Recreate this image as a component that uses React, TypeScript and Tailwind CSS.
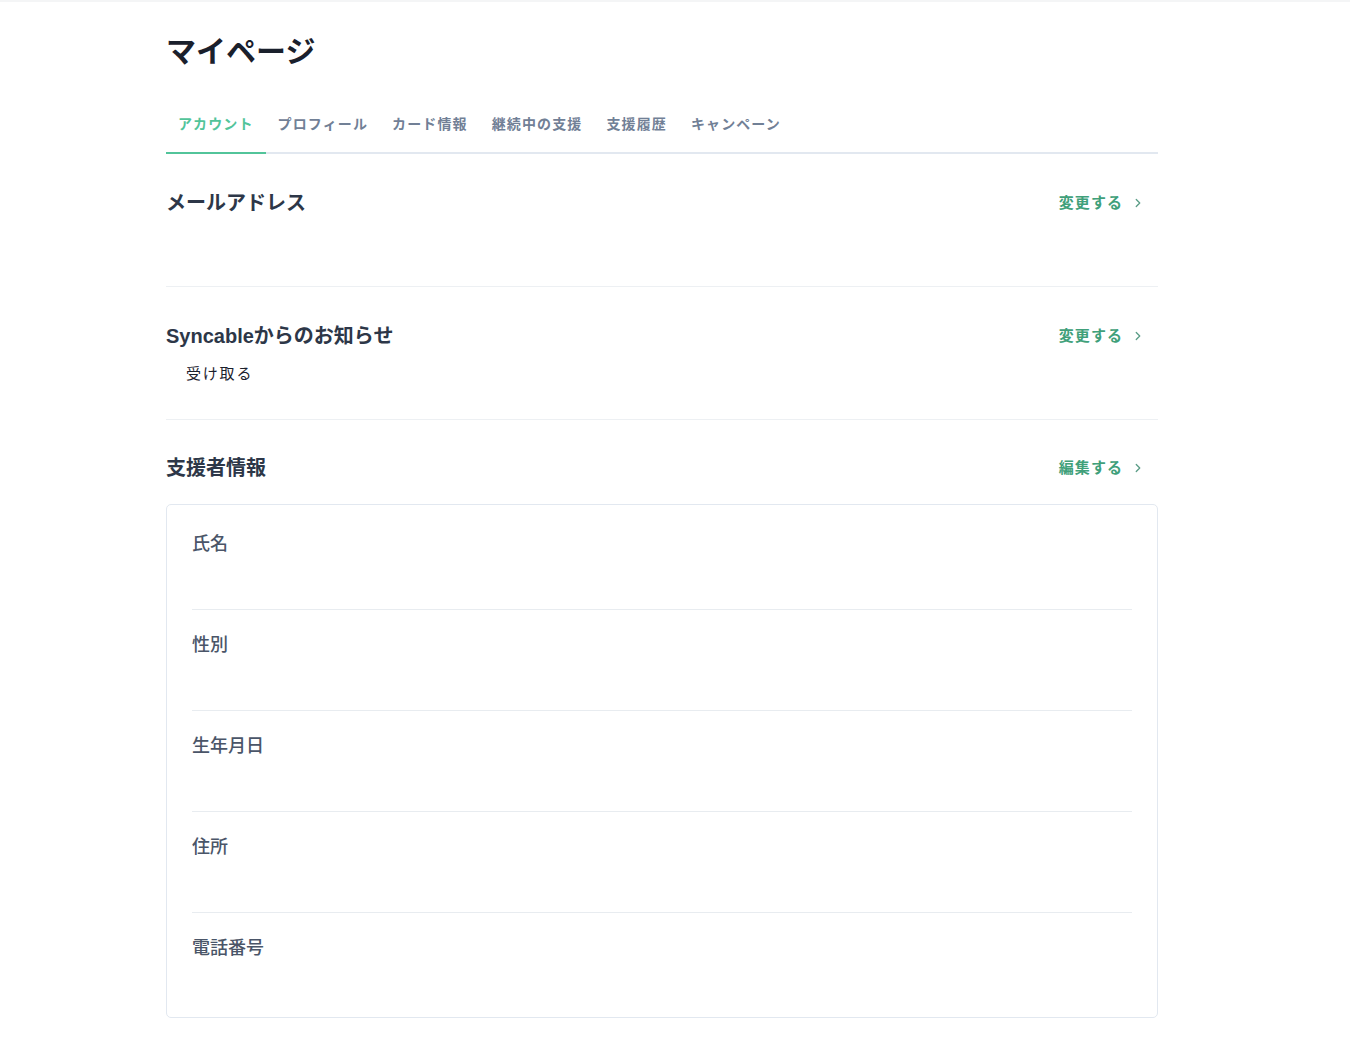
import { ChevronRight } from "lucide-react";

const tabs = ["アカウント", "プロフィール", "カード情報", "継続中の支援", "支援履歴", "キャンペーン"];
const fields = ["氏名", "性別", "生年月日", "住所", "電話番号"];

const font = { fontFamily: '"Liberation Sans", "Noto Sans CJK JP", sans-serif' };

function ActionLink({ label }: { label: string }) {
  return (
    <a className="flex items-center gap-[8px] pr-[13px] text-[15px] font-bold text-[#40a07a] tracking-[0.07em]">
      {label}
      <ChevronRight className="w-[14px] h-[14px] text-[#5a9c86]" strokeWidth={2.2} />
    </a>
  );
}

export default function App() {
  return (
    <div className="min-h-screen bg-white border-t-2 border-[#f4f5f6]" style={font}>
      <main className="w-[992px] ml-[166px]">
        <h1 className="pt-[32px] text-[30px] leading-[36px] font-bold text-[#1a202c]">マイページ</h1>

        <nav className="mt-[32px] flex border-b-2 border-[#e2e8f0]">
          {tabs.map((t, i) => (
            <div
              key={t}
              className={
                i === 0
                  ? "px-[12px] pt-[12px] pb-[18px] -mb-[2px] border-b-2 border-[#52c49a] text-[14px] leading-[20px] font-bold text-[#52c49a] tracking-[0.08em]"
                  : "px-[12px] pt-[12px] pb-[18px] -mb-[2px] border-b-2 border-transparent text-[14px] leading-[20px] font-bold text-[#718096] tracking-[0.08em]"
              }
            >
              {t}
            </div>
          ))}
        </nav>

        <section className="pt-[35px] pb-[34px] border-b border-[#edf0f3]">
          <div className="flex items-center justify-between">
            <h2 className="text-[20px] leading-[28px] font-bold text-[#2d3748]">メールアドレス</h2>
            <ActionLink label="変更する" />
          </div>
          <div className="h-[35px]" />
        </section>

        <section className="pt-[35px] pb-[34px] border-b border-[#edf0f3]">
          <div className="flex items-center justify-between">
            <h2 className="text-[20px] leading-[28px] font-bold text-[#2d3748]">Syncableからのお知らせ</h2>
            <ActionLink label="変更する" />
          </div>
          <p className="mt-[13px] pl-[20px] text-[15px] leading-[22px] text-[#1a202c] tracking-[0.12em]">受け取る</p>
        </section>

        <section className="pt-[34px] pb-[42px]">
          <div className="flex items-center justify-between">
            <h2 className="text-[20px] leading-[28px] font-bold text-[#2d3748]">支援者情報</h2>
            <ActionLink label="編集する" />
          </div>
          <div className="mt-[22px] border border-[#e2e8f0] rounded-[5px] px-[25px] pt-[4px] pb-[3px]">
            {fields.map((f, i) => (
              <div
                key={f}
                className={i < fields.length - 1 ? "h-[101px] pt-[22px] border-b border-[#e8ecf0]" : "h-[101px] pt-[22px]"}
              >
                <div className="text-[18px] leading-[27px] font-medium text-[#4a5568]">{f}</div>
              </div>
            ))}
          </div>
        </section>
      </main>
    </div>
  );
}
